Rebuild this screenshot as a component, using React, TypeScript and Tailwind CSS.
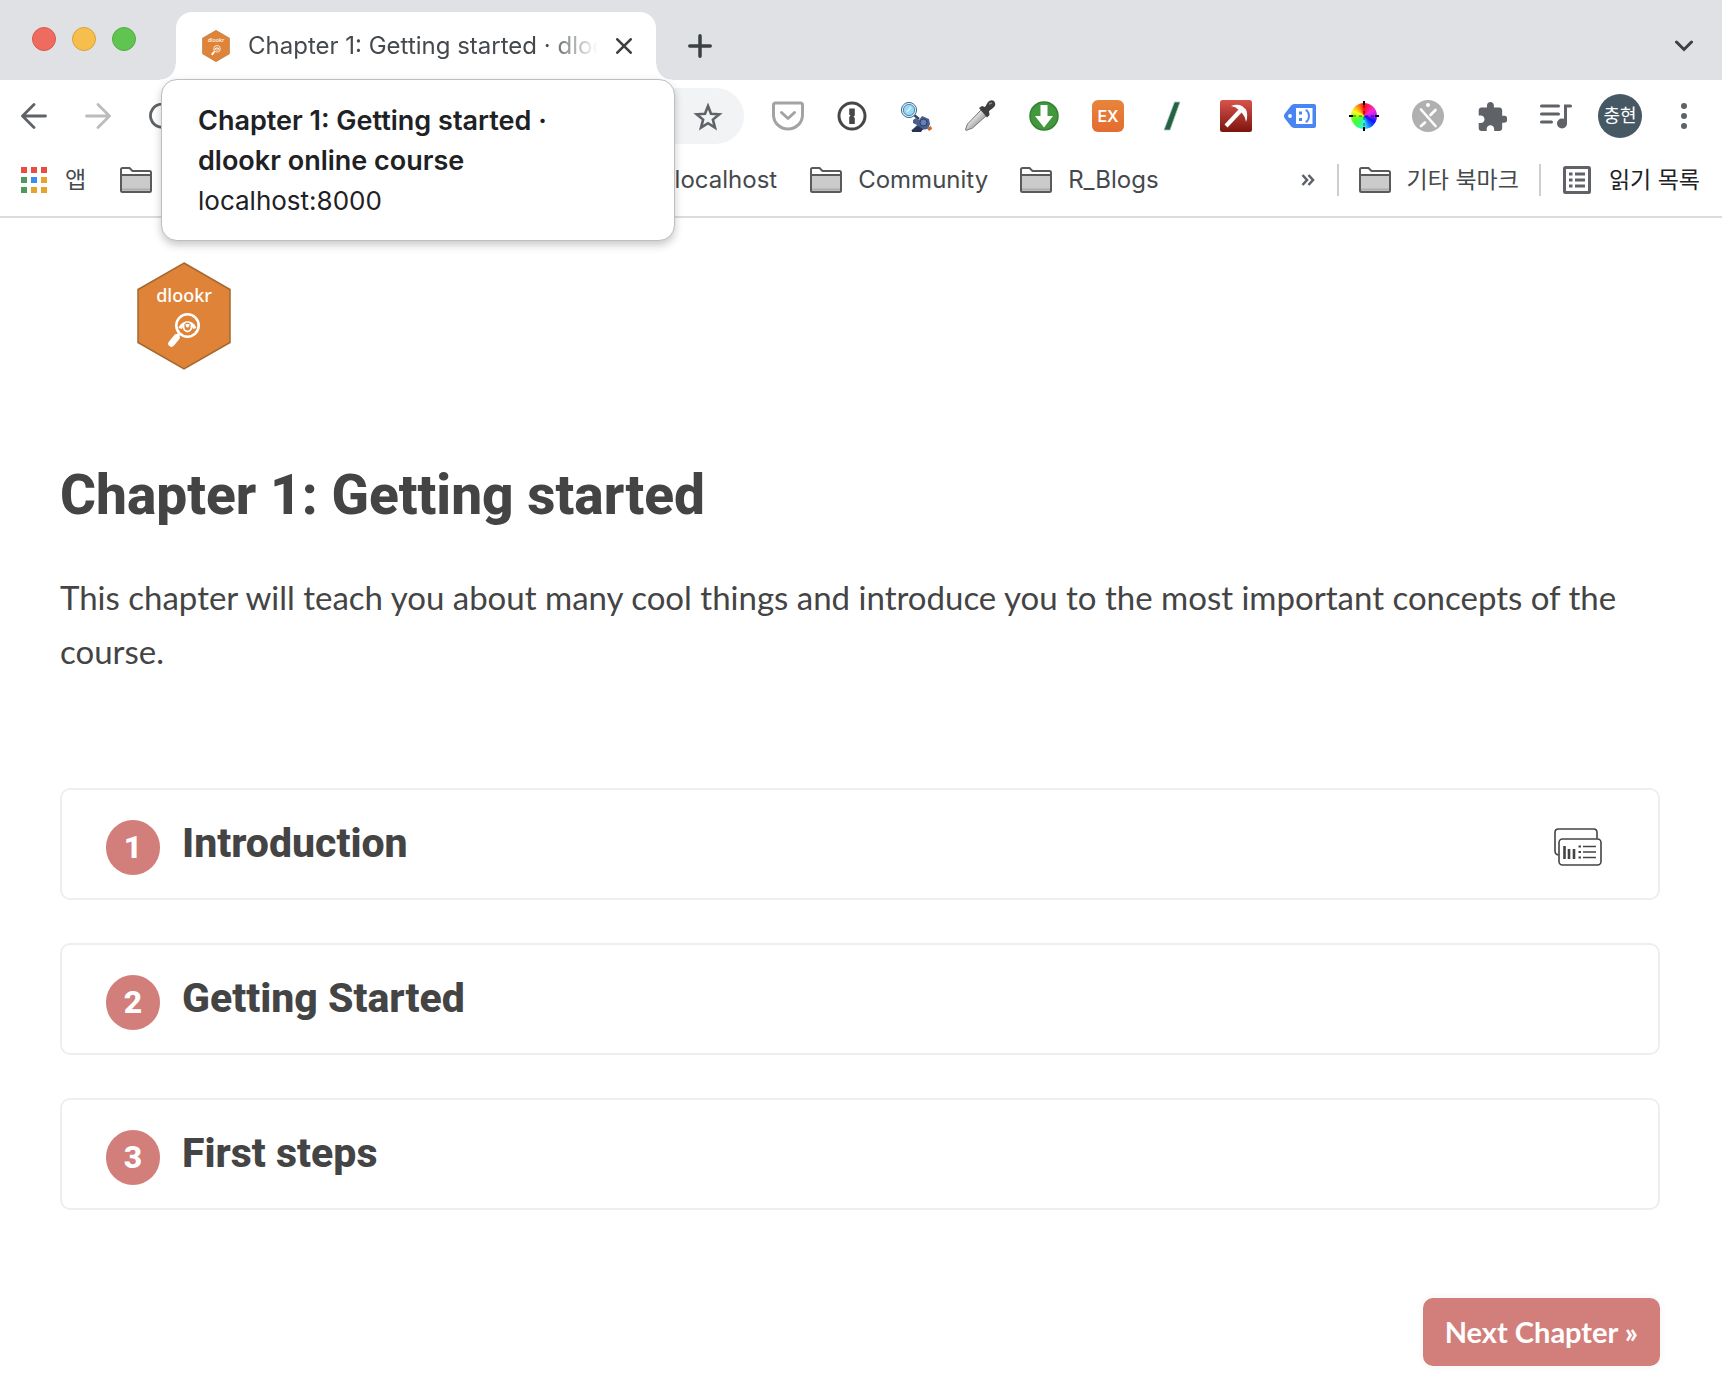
import React from "react";

const UI_FONT = "font-['Inter','Noto_Sans_CJK_KR',sans-serif]";

function HexLogo({ className }: { className: string }) {
  return (
    <svg viewBox="0 0 94 108" className={className} role="img" aria-label="dlookr">
      <path d="M47 1 93 27.500V80.500L47 107 1 80.500V27.500Z" fill="#de8338" stroke="#a5682f" strokeWidth="1.500" />
      <text x="47" y="39.500" textAnchor="middle" fontSize="18" fontWeight="500" fill="#fff" className="font-['Noto_Sans',sans-serif]">
        dlookr
      </text>
      <circle cx="50.500" cy="63.500" r="11.200" fill="none" stroke="#fff" strokeWidth="2.600" />
      <path d="M41.500 66C45 57 56 57 59.500 66L56 67Q54 60.500 50.500 60.500T45 67Z" fill="#fff" />
      <path d="M46.500 62.500v2a4 5 0 0 0 8 0v-2" fill="none" stroke="#fff" strokeWidth="1.800" />
      <path d="M48.500 62a2 3.500 0 0 0 4 0z" fill="#fff" />
      <path d="m42 72-2.500 3" stroke="#fff" strokeWidth="3" />
      <path d="m39.500 75.500-5 6" stroke="#fff" strokeWidth="6.500" strokeLinecap="round" />
    </svg>
  );
}

function FolderIcon() {
  return (
    <svg viewBox="0 0 32 26" className="h-[26px] w-8 shrink-0" aria-hidden="true">
      <path d="M1 8V2.500Q1 1 2.500 1H9.500L12.500 4H29.500Q31 4 31 5.500V8Z" fill="#fff" stroke="#5a5a5a" strokeWidth="2" />
      <path d="M1 8H31V23.500Q31 25 29.500 25H2.500Q1 25 1 23.500Z" fill="#cbcbcb" stroke="#5a5a5a" strokeWidth="2" />
      <path d="M2 22.500H30" stroke="#adadad" strokeWidth="2" />
    </svg>
  );
}

function PocketIcon() {
  return (
    <svg viewBox="0 0 32 30" className="w-8" fill="none" stroke="#a3a3a3" strokeWidth="3" strokeLinejoin="round" strokeLinecap="round">
      <path d="M3.500 2H28.500Q30.500 2 30.500 4V14A14.500 14 0 0 1 1.500 14V4Q1.500 2 3.500 2Z" />
      <path d="m9.500 11.500 6.500 6 6.500-6" />
    </svg>
  );
}

function OnePasswordIcon() {
  return (
    <svg viewBox="0 0 30 30" className="w-[30px]">
      <circle cx="15" cy="15" r="13" fill="#fff" stroke="#474747" strokeWidth="3" />
      <path d="M12.200 7.500h5.600v7l-1.300 1.300 1.300 1.200v6h-5.600v-7l1.300-1.200-1.300-1.300z" fill="#474747" />
    </svg>
  );
}

function DetectiveIcon() {
  return (
    <svg viewBox="0 0 32 32" className="w-8">
      <path d="m14 15 5 4" stroke="#34466b" strokeWidth="2.500" />
      <circle cx="9" cy="10" r="7.600" fill="#e4eaf0" stroke="#3f6c98" strokeWidth="1" />
      <circle cx="9" cy="10" r="5.600" fill="#9bd8f5" stroke="#4f87b5" strokeWidth="1" />
      <path d="m7 12 4-5" stroke="#d5f1fc" strokeWidth="1.500" />
      <path d="m13 20 3-2 3 2 3-4 7 3 1 5-2 5-7 1-3 1H11l4-4 2-2-4-2z" fill="#4a5f90" />
      <path d="m12 30 6-4 5 3-2 3h-9z" fill="#27334f" />
      <circle cx="23.500" cy="22.500" r="3.500" fill="#6680b4" stroke="#2b3b60" strokeWidth="1" />
      <path d="m27 28 4-2 1 3-3 2z" fill="#c8682a" />
    </svg>
  );
}

function DropperIcon() {
  return (
    <svg viewBox="0 0 32 32" className="w-8">
      <defs>
        <linearGradient id="barrel" x1="0" y1="0" x2="1" y2="1">
          <stop offset="0.300" stopColor="#f1f1f1" />
          <stop offset="0.700" stopColor="#9a9a9a" />
        </linearGradient>
      </defs>
      <path d="M17 10 22.500 15.500 8.500 28 2 30.500 1.500 29.500 3.500 24Z" fill="url(#barrel)" stroke="#777" strokeWidth="1" />
      <path d="m15 8 3-2 3 1 3-5q3-3 6-1 3 4-1 7l-4 3 .5 4-2.500 2.500Z" fill="#3f3f3f" />
      <path d="m25 4 3-1" stroke="#888" strokeWidth="1.500" />
    </svg>
  );
}

function DownloadIcon() {
  return (
    <svg viewBox="0 0 30 30" className="w-[30px]">
      <circle cx="15" cy="15" r="14" fill="#43983e" stroke="#31832f" strokeWidth="1.500" />
      <path d="M11.500 4h7v11h5.500L15 26.500 6 15h5.500z" fill="#fff" />
    </svg>
  );
}

function SlashIcon() {
  return (
    <svg viewBox="0 0 18 30" className="w-[18px]">
      <path d="M11.500 1H17L7 29H1Z" fill="#236242" stroke="#a9c5b6" strokeWidth="0.800" />
    </svg>
  );
}

function PickaxeIcon() {
  return (
    <svg viewBox="0 0 32 32" className="w-8">
      <defs>
        <linearGradient id="ruby" x1="0" y1="0" x2="0" y2="1">
          <stop offset="0" stopColor="#d9534c" />
          <stop offset="1" stopColor="#7c150d" />
        </linearGradient>
      </defs>
      <rect width="32" height="32" rx="2.500" fill="url(#ruby)" />
      <path d="M6 26 21 10" stroke="#fff" strokeWidth="4.200" />
      <path d="M11 6Q17 3.500 22 6L26 9.500Q28.500 15 26 22 25 16 21.500 12.500L19 10Q15.500 6.500 11 6Z" fill="#fff" />
    </svg>
  );
}

function TagIcon() {
  return (
    <svg viewBox="0 0 32 24" className="w-8">
      <path d="M10 0H30Q32 0 32 2V22Q32 24 30 24H10L7.500 23 .5 14Q-.5 12 .5 10L7.500 1Z" fill="#4a86f3" />
      <rect x="12" y="4" width="16.500" height="16" fill="#fff" />
      <circle cx="6" cy="12" r="1.900" fill="#fff" />
      <path d="M15 7.500h3v3h-3zM15 14h3v3h-3z" fill="#4a86f3" />
      <path d="M21.500 6.500H23Q25 9 25 12T23 17.500H21.500" fill="none" stroke="#4a86f3" strokeWidth="2" />
    </svg>
  );
}

function ColorWheelIcon() {
  return (
    <span className="relative flex size-[30px] items-center justify-center">
      <span className="size-[26px] rounded-full bg-[conic-gradient(#ff1010,#f828d8_16%,#b020ff_24%,#1010ff_33%,#1060ff_40%,#40f0f0_50%,#30ff60_60%,#60ff20_70%,#f8ff20_82%,#ff9010_91%,#ff1010)]" />
      <svg viewBox="0 0 30 30" className="absolute inset-0" stroke="#000">
        <path d="M15 0v4M15 26v4M0 15h4M26 15h4" strokeWidth="2" />
        <path d="M15 4v22M4 15h22" strokeWidth="0.600" strokeDasharray="3 3" />
      </svg>
    </span>
  );
}

function XCircleIcon() {
  return (
    <svg viewBox="0 0 32 32" className="w-8" stroke="#fff" strokeWidth="2.600" strokeLinecap="round">
      <circle cx="16" cy="16" r="16" fill="#b0b0b0" stroke="none" />
      <circle cx="16" cy="5" r="2" fill="#fff" stroke="none" />
      <path d="M9 9.500 23.500 26M23.500 10 18.500 15M13 22.500 9 26" />
    </svg>
  );
}

function PuzzleIcon() {
  return (
    <svg viewBox="1.500 1 21 21" className="w-[29px]">
      <path
        fill="#5f6368"
        d="M20.500 11H19V7c0-1.100-.9-2-2-2h-4V3.500C13 2.120 11.880 1 10.500 1S8 2.120 8 3.500V5H4c-1.100 0-1.990.9-1.990 2v3.800H3.500c1.490 0 2.700 1.210 2.700 2.700s-1.210 2.700-2.700 2.700H2V20c0 1.100.9 2 2 2h3.800v-1.500c0-1.490 1.210-2.700 2.700-2.700 1.490 0 2.700 1.210 2.700 2.700V22H17c1.100 0 2-.9 2-2v-4h1.500c1.380 0 2.500-1.120 2.500-2.500S21.880 11 20.500 11z"
      />
    </svg>
  );
}

function QueueIcon() {
  return (
    <svg viewBox="0 0 32 26" className="w-8" fill="none" stroke="#5f6368" strokeWidth="3" strokeLinecap="round">
      <path d="M1.500 3H18.500M1.500 11H18.500M1.500 19H11.500M25.500 20V3H30.500" />
      <circle cx="22" cy="20.500" r="5" fill="#5f6368" stroke="none" />
    </svg>
  );
}

function DotsIcon() {
  return (
    <svg viewBox="0 0 6 26" className="h-[26px] w-1.5" fill="#5f6368">
      <circle cx="3" cy="3" r="3" />
      <circle cx="3" cy="13" r="3" />
      <circle cx="3" cy="23" r="3" />
    </svg>
  );
}

function ArrowIcon({ className }: { className: string }) {
  return (
    <svg viewBox="0 0 26 26" className={className} fill="none" stroke="currentColor" strokeWidth="2.800" strokeLinecap="round" strokeLinejoin="round">
      <path d="M24.500 13H2M13 1.500 1.500 13 13 24.500" />
    </svg>
  );
}

function SlidesIcon() {
  return (
    <svg viewBox="0 0 48 38" className="mt-1.5 h-[38px] w-12 shrink-0" fill="none" stroke="#444" strokeWidth="1.600" role="img" aria-label="Slides">
      <path d="M4.500 27Q1 26.500 1 23V4.500Q1 1 4.500 1H39.500Q43 1 43 4.500V10.500" />
      <rect x="5" y="11" width="42" height="26" rx="3.500" />
      <path d="M10.500 18v13M15 21v10M20 21v10" strokeWidth="2.600" />
      <path d="M29 18.500h13M29 24h13M29 29.500h13" />
      <path d="M24.500 18.500h2.500M24.500 24h2.500M24.500 29.500h2.500" strokeWidth="2.200" />
    </svg>
  );
}

function ToolButton({ label, children }: { label: string; children: React.ReactNode }) {
  return (
    <button type="button" aria-label={label} className="flex h-14 w-16 shrink-0 items-center justify-center">
      {children}
    </button>
  );
}

const extensions: [string, React.ReactNode][] = [
  ["Pocket", <PocketIcon />],
  ["1Password", <OnePasswordIcon />],
  ["Search helper", <DetectiveIcon />],
  ["Color picker", <DropperIcon />],
  ["Downloader", <DownloadIcon />],
  ["EX", <span className="flex size-8 items-center justify-center rounded-[6px] bg-linear-to-b from-[#e8843a] to-[#e36c30] text-base font-semibold text-white">EX</span>],
  ["Slash", <SlashIcon />],
  ["Miner", <PickaxeIcon />],
  ["Tag assistant", <TagIcon />],
  ["Color wheel", <ColorWheelIcon />],
  ["X tool", <XCircleIcon />],
  ["Extensions", <PuzzleIcon />],
  ["Media", <QueueIcon />],
  ["Profile", <span className="flex size-11 items-center justify-center rounded-full bg-[#465863] text-lg text-white">충현</span>],
  ["Menu", <DotsIcon />],
];

const appColors = ["bg-[#e84d3d]", "bg-[#e84d3d]", "bg-[#e84d3d]", "bg-[#4f9a5b]", "bg-[#3f8cf0]", "bg-[#e6a32e]", "bg-[#4f9a5b]", "bg-[#e6a32e]", "bg-[#e6a32e]"];

const exercises = [
  { title: "Introduction", slides: true },
  { title: "Getting Started", slides: false },
  { title: "First steps", slides: false },
];

function TabStrip() {
  return (
    <div className="flex h-20 items-end bg-[#dfe1e5] pr-6">
      <div className="flex h-20 w-44 shrink-0 gap-4 pt-[27px] pl-8">
        <button type="button" aria-label="Close window" className="size-6 rounded-full border border-[#d9584c] bg-[#ee6b5f]" />
        <button type="button" aria-label="Minimize window" className="size-6 rounded-full border border-[#daa23c] bg-[#f6be4a]" />
        <button type="button" aria-label="Zoom window" className="size-6 rounded-full border border-[#55ac43] bg-[#60c450]" />
      </div>
      <div className="relative flex h-17 w-120 shrink-0 items-center rounded-t-2xl bg-white pr-[18px] pl-[26px]">
        <span className="absolute bottom-0 -left-4 size-4 bg-[radial-gradient(circle_at_0_0,transparent_15px,white_16px)]" />
        <span className="absolute -right-4 bottom-0 size-4 bg-[radial-gradient(circle_at_100%_0,transparent_15px,white_16px)]" />
        <HexLogo className="h-8 w-7 shrink-0" />
        <span className="ml-[18px] min-w-0 flex-1 overflow-hidden mask-r-from-85% text-2xl whitespace-nowrap text-[#45494d]">Chapter 1: Getting started · dlookr online course</span>
        <button type="button" aria-label="Close tab" className="ml-3 flex size-7 items-center justify-center">
          <svg viewBox="0 0 16 16" className="size-4" stroke="#3c4043" strokeWidth="2.600" strokeLinecap="round">
            <path d="m1.300 1.300 13.400 13.400M14.700 1.300 1.300 14.700" />
          </svg>
        </button>
      </div>
      <button type="button" aria-label="New tab" className="ml-6 flex h-17 w-10 items-center justify-center">
        <svg viewBox="0 0 24 24" className="size-6" stroke="#3c4043" strokeWidth="3.500" strokeLinecap="round">
          <path d="M12 1.800v20.400M1.800 12h20.400" />
        </svg>
      </button>
      <button type="button" aria-label="Search tabs" className="ml-auto flex h-17 w-7 items-center justify-center">
        <svg viewBox="0 0 18 12" className="w-[18px]" fill="none" stroke="#3c4043" strokeWidth="3" strokeLinecap="round">
          <path d="m1.500 2 7.500 7.500L16.500 2" />
        </svg>
      </button>
    </div>
  );
}

function Toolbar() {
  return (
    <div className="flex h-18 items-center pr-1.5 pl-0.5">
      <ToolButton label="Back"><ArrowIcon className="w-[26px] text-[#5f6368]" /></ToolButton>
      <ToolButton label="Forward"><ArrowIcon className="w-[26px] rotate-180 text-[#babcbe]" /></ToolButton>
      <ToolButton label="Reload">
        <svg viewBox="0 0 26 26" className="w-[26px]" fill="none" stroke="#5f6368" strokeWidth="2.800">
          <path d="M22 5.500A11.500 11.500 0 1 0 24.500 13M24.500 1v8h-8" />
        </svg>
      </ToolButton>
      <div className="mr-3 flex h-14 flex-1 items-center justify-end rounded-full bg-[#f1f3f4] pr-1">
        <ToolButton label="Bookmark this tab">
          <svg viewBox="0 0 30 29" className="w-[30px]" fill="none" stroke="#5f6368" strokeWidth="2.600">
            <path d="m15 4 3 7.700 8.300.6-6.400 5.300 2.100 8L15 21.200 8 25.600l2.100-8-6.400-5.300 8.300-.6z" />
          </svg>
        </ToolButton>
      </div>
      {extensions.map(([label, icon]) => (
        <ToolButton key={label} label={label}>{icon}</ToolButton>
      ))}
    </div>
  );
}

function BookmarksBar() {
  return (
    <div className="flex h-[66px] items-center border-b-2 border-[#dadcdd] pr-[22px] pb-2 pl-[21px] text-2xl whitespace-nowrap text-[#45494d]">
      <a href="#apps" className="flex items-center gap-[18px]">
        <span className="grid grid-cols-3 gap-1">
          {appColors.map((c, i) => (
            <span key={i} className={`size-1.5 ${c}`} />
          ))}
        </span>
        <span className="text-[23px]">앱</span>
      </a>
      <a href="#folder" aria-label="Bookmark folder" className="ml-[34px]"><FolderIcon /></a>
      <a href="#localhost" className="w-[625px] text-right">R_localhost</a>
      <a href="#community" className="ml-[33px] flex items-center gap-4"><FolderIcon />Community</a>
      <a href="#blogs" className="ml-8 flex items-center gap-4"><FolderIcon />R_Blogs</a>
      <button type="button" aria-label="More bookmarks" className="ml-auto">
        <svg viewBox="0 0 14 12" className="w-[14px]" fill="none" stroke="#5f6368" strokeWidth="2.600">
          <path d="m1.500 1 4.500 5-4.500 5M7.500 1l4.500 5-4.500 5" />
        </svg>
      </button>
      <span className="ml-[22px] h-8 w-0.5 bg-[#cdcfd1]" />
      <a href="#other" className="ml-5 flex items-center gap-4"><FolderIcon /><span className="text-[23px]">기타 북마크</span></a>
      <span className="ml-5 h-8 w-0.5 bg-[#cdcfd1]" />
      <button type="button" className="ml-[22px] flex items-center gap-[18px]">
        <svg viewBox="0 0 28 28" className="w-7" fill="none" stroke="#5f6368" strokeWidth="3">
          <rect x="1.500" y="1.500" width="25" height="25" rx="1" />
          <path d="M6 8h3.500M12 8h10M6 14h3.500M12 14h10M6 20h3.500M12 20h10" />
        </svg>
        <span className="text-[23px] text-[#202124]">읽기 목록</span>
      </button>
    </div>
  );
}

export default function App() {
  return (
    <div className="relative min-h-screen bg-white">
      <header className={UI_FONT}>
        <TabStrip />
        <Toolbar />
        <BookmarksBar />
      </header>
      <div role="tooltip" className={`absolute top-[79px] left-[161px] w-[514px] rounded-2xl border border-[#bcbec0] bg-white px-9 pt-[21px] pb-[19px] text-[26px] leading-10 text-[#202124] shadow-[0_4px_8px_rgba(0,0,0,0.22)] ${UI_FONT}`}>
        <p className="text-[27px] leading-10 font-semibold">Chapter 1: Getting started ·<br />dlookr online course</p>
        <p>localhost:8000</p>
      </div>

      <main className="pt-11 pr-[62px] pb-2.5 pl-15 font-['Lato',sans-serif] text-[#444]">
        <a href="#home" className="ml-[77px] block w-[94px]"><HexLogo className="h-[108px] w-[94px]" /></a>
        <h1 className="mt-[90px] font-['Roboto',sans-serif] text-[55px] leading-[70px] font-extrabold">Chapter 1: Getting started</h1>
        <p className="mt-10 text-[33px] leading-[54px]">
          This chapter will teach you about many cool things and introduce you to the most important concepts of the course.
        </p>
        <div className="mt-[110px] flex flex-col gap-[43px]">
          {exercises.map(({ title, slides }, i) => (
            <section key={title} className="flex h-28 items-center rounded-[10px] border-2 border-[#eee] pr-14 pl-11">
              <h2 className="flex flex-1 items-center gap-[22px] font-['Roboto',sans-serif] text-[41px] font-extrabold">
                <span className="mt-1.5 flex h-[55px] w-[54px] items-center justify-center rounded-[27px] bg-[#d27e7a] text-[32px] text-white">{i + 1}</span>
                <a href={`#exercise-${i + 1}`}>{title}</a>
              </h2>
              {slides && <SlidesIcon />}
            </section>
          ))}
        </div>
        <div className="mt-22 flex justify-end">
          <button type="button" className="h-17 rounded-[10px] bg-[#d27e7a] px-[22px] text-[29px] font-bold text-white shadow-[0_0_8px_rgba(0,0,0,0.06)]">Next Chapter »</button>
        </div>
      </main>
    </div>
  );
}
